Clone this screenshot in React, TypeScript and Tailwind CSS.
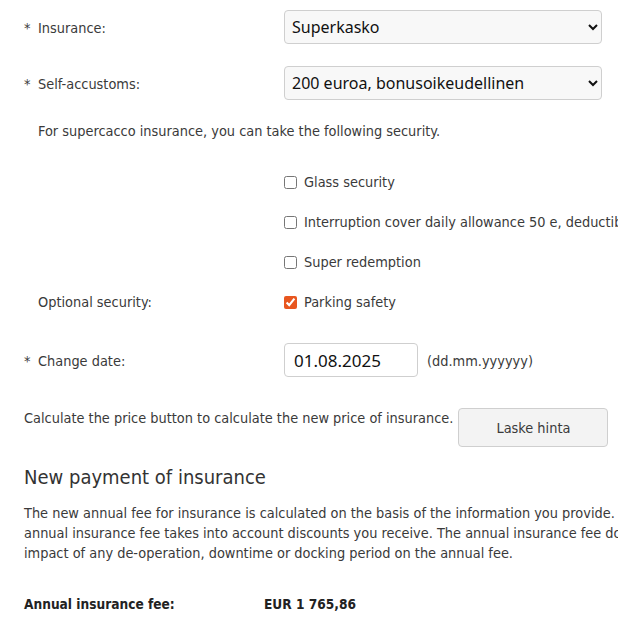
import { useState } from 'react';

const label = 'text-[14.4px] leading-[20px] text-[#3a3a3a]';
const ctl = "font-['Noto_Sans',sans-serif] text-[16px] text-[#111]";

function Req({ text }: { text: string }) {
  return (
    <div className={`w-[260px] shrink-0 flex pt-[2px] ${label}`}>
      <span className="w-[14px]">*</span>
      <span>{text}</span>
    </div>
  );
}

function Check({ text, checked }: { text: string; checked?: boolean }) {
  const [on, setOn] = useState(!!checked);
  return (
    <label className={`flex items-center gap-[7px] whitespace-nowrap ${label}`}>
      <input
        type="checkbox"
        checked={on}
        onChange={() => setOn(!on)}
        className="m-0 w-[13px] h-[13px] accent-[#e8561f]"
      />
      <span>{text}</span>
    </label>
  );
}

export default function App() {
  return (
    <div className="w-[618px] h-[618px] overflow-hidden bg-white font-['DejaVu_Sans_Condensed','DejaVu_Sans',sans-serif]">
      <div className="w-[900px] pl-[24px] pt-[10px]">
        <div className="flex items-center">
          <Req text="Insurance:" />
          <select className={`w-[318px] h-[34px] pl-[3px] pr-2 bg-[#f8f8f8] border border-[#cfcfcf] rounded ${ctl}`}>
            <option>Superkasko</option>
          </select>
        </div>

        <div className="flex items-center mt-[22px]">
          <Req text="Self-accustoms:" />
          <select className={`w-[318px] h-[34px] pl-[3px] pr-2 bg-[#f8f8f8] border border-[#cfcfcf] rounded ${ctl}`}>
            <option>200 euroa, bonusoikeudellinen</option>
          </select>
        </div>

        <p className={`mt-[21px] pl-[14px] ${label}`}>For supercacco insurance, you can take the following security.</p>

        <div className="mt-[31px] flex flex-col gap-[20px]">
          <div className="pl-[260px]"><Check text="Glass security" /></div>
          <div className="pl-[260px]"><Check text="Interruption cover daily allowance 50 e, deductible 7 days" /></div>
          <div className="pl-[260px]"><Check text="Super redemption" /></div>
          <div className="flex">
            <div className={`w-[260px] pl-[14px] ${label}`}>Optional security:</div>
            <Check text="Parking safety" checked />
          </div>
        </div>

        <div className="flex items-center mt-[31px]">
          <Req text="Change date:" />
          <input
            defaultValue="01.08.2025"
            className={`w-[134px] h-[34px] px-[9px] bg-white border border-[#cfcfcf] rounded outline-none ${ctl} text-[17px]`}
          />
          <span className={`ml-[9px] pt-[2px] ${label}`}>(dd.mm.yyyyyy)</span>
        </div>

        <div className="flex items-start mt-[31px]">
          <span className={label}>Calculate the price button to calculate the new price of insurance.</span>
          <button className={`ml-[5px] w-[150px] h-[39px] bg-[#f3f3f3] border border-[#cfcfcf] rounded ${label}`}>
            Laske hinta
          </button>
        </div>

        <h2 className="mt-[18px] text-[20px] leading-[24px] text-[#333]">New payment of insurance</h2>

        <p className={`mt-[14px] whitespace-nowrap ${label}`}>
          The new annual fee for insurance is calculated on the basis of the information you provide. The
          <br />
          annual insurance fee takes into account discounts you receive. The annual insurance fee does not take into account the
          <br />
          impact of any de-operation, downtime or docking period on the annual fee.
        </p>

        <div className="mt-[31px] flex font-bold text-[13.6px] leading-[20px] text-[#222]">
          <span className="w-[240px]">Annual insurance fee:</span>
          <span>EUR 1 765,86</span>
        </div>
      </div>
    </div>
  );
}
